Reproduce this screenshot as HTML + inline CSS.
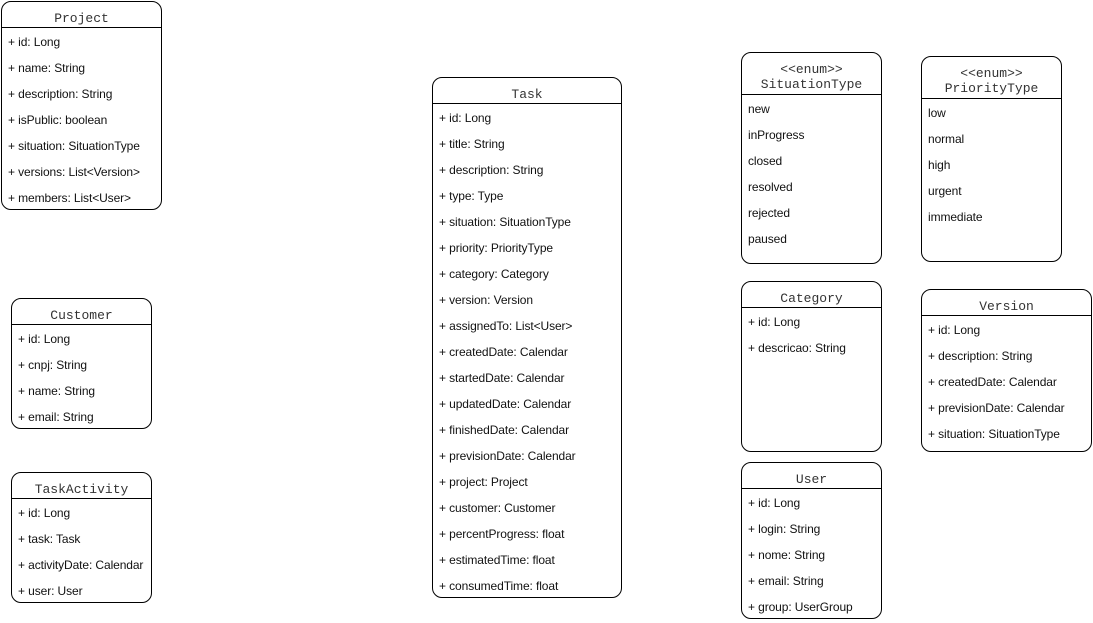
<!DOCTYPE html>
<html><head><meta charset="utf-8"><style>
body{margin:0;width:1093px;height:623px;background:#fff;position:relative;overflow:hidden;font-family:"Liberation Sans",sans-serif;font-size:12px;color:#111}
.b{position:absolute;border:1px solid #000;border-radius:10px;box-sizing:border-box;background:#fff}
.h{font-family:"Liberation Mono",monospace;font-size:13px;text-align:center;border-bottom:1px solid #000;box-sizing:border-box;display:flex;flex-direction:column;justify-content:center;line-height:15px;padding-top:7px;color:#333}
.r{height:26px;line-height:26px;padding-left:6px;white-space:nowrap;letter-spacing:-0.1px}
.f{padding-top:1px}
</style></head><body>

<div class="b" style="left:1px;top:1px;width:161px;height:209px">
<div class="h" style="height:26px">Project</div><div class="f">
<div class="r">+ id: Long</div><div class="r">+ name: String</div><div class="r">+ description: String</div><div class="r">+ isPublic: boolean</div><div class="r">+ situation: SituationType</div><div class="r">+ versions: List&lt;Version&gt;</div><div class="r">+ members: List&lt;User&gt;</div></div></div>

<div class="b" style="left:11px;top:298px;width:141px;height:131px">
<div class="h" style="height:26px">Customer</div><div class="f">
<div class="r">+ id: Long</div><div class="r">+ cnpj: String</div><div class="r">+ name: String</div><div class="r">+ email: String</div></div></div>

<div class="b" style="left:11px;top:472px;width:141px;height:131px">
<div class="h" style="height:26px">TaskActivity</div><div class="f">
<div class="r">+ id: Long</div><div class="r">+ task: Task</div><div class="r">+ activityDate: Calendar</div><div class="r">+ user: User</div></div></div>

<div class="b" style="left:432px;top:77px;width:190px;height:521px">
<div class="h" style="height:26px">Task</div><div class="f">
<div class="r">+ id: Long</div><div class="r">+ title: String</div><div class="r">+ description: String</div><div class="r">+ type: Type</div><div class="r">+ situation: SituationType</div><div class="r">+ priority: PriorityType</div><div class="r">+ category: Category</div><div class="r">+ version: Version</div><div class="r">+ assignedTo: List&lt;User&gt;</div><div class="r">+ createdDate: Calendar</div><div class="r">+ startedDate: Calendar</div><div class="r">+ updatedDate: Calendar</div><div class="r">+ finishedDate: Calendar</div><div class="r">+ previsionDate: Calendar</div><div class="r">+ project: Project</div><div class="r">+ customer: Customer</div><div class="r">+ percentProgress: float</div><div class="r">+ estimatedTime: float</div><div class="r">+ consumedTime: float</div></div></div>

<div class="b" style="left:741px;top:52px;width:141px;height:212px">
<div class="h" style="height:42px">&lt;&lt;enum&gt;&gt;<br>SituationType</div><div class="f">
<div class="r">new</div><div class="r">inProgress</div><div class="r">closed</div><div class="r">resolved</div><div class="r">rejected</div><div class="r">paused</div></div></div>

<div class="b" style="left:921px;top:56px;width:141px;height:206px">
<div class="h" style="height:42px">&lt;&lt;enum&gt;&gt;<br>PriorityType</div><div class="f">
<div class="r">low</div><div class="r">normal</div><div class="r">high</div><div class="r">urgent</div><div class="r">immediate</div></div></div>

<div class="b" style="left:741px;top:281px;width:141px;height:171px">
<div class="h" style="height:26px">Category</div><div class="f">
<div class="r">+ id: Long</div><div class="r">+ descricao: String</div></div></div>

<div class="b" style="left:921px;top:289px;width:171px;height:163px">
<div class="h" style="height:26px">Version</div><div class="f">
<div class="r">+ id: Long</div><div class="r">+ description: String</div><div class="r">+ createdDate: Calendar</div><div class="r">+ previsionDate: Calendar</div><div class="r">+ situation: SituationType</div></div></div>

<div class="b" style="left:741px;top:462px;width:141px;height:157px">
<div class="h" style="height:26px">User</div><div class="f">
<div class="r">+ id: Long</div><div class="r">+ login: String</div><div class="r">+ nome: String</div><div class="r">+ email: String</div><div class="r">+ group: UserGroup</div></div></div>

</body></html>
